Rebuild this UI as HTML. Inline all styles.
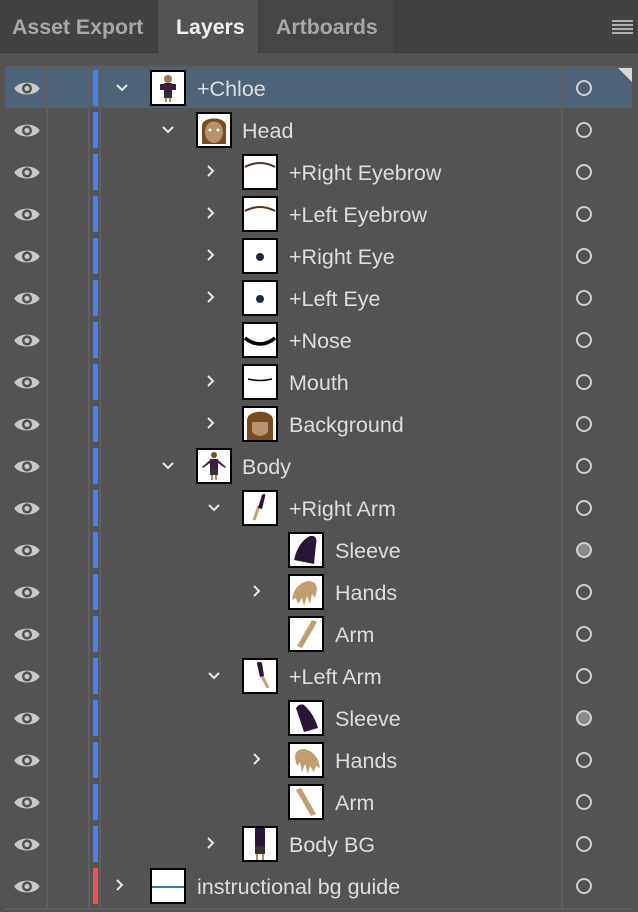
<!DOCTYPE html>
<html><head><meta charset="utf-8"><style>
*{margin:0;padding:0;box-sizing:border-box}
body{width:638px;height:912px;background:#535353;font-family:"Liberation Sans",sans-serif;position:relative;overflow:hidden;color:#dcdcdc}
.tabs{position:absolute;left:0;top:0;width:638px;height:53px;background:#424242;border-bottom:1px solid #3a3a3a}
.tab{position:absolute;top:0;height:53px;font-size:21.3px;font-weight:bold;line-height:55px;color:#a8a8a8;padding-left:12px}
.tab.a{background:#535353;color:#efefef;height:54px}
.row{position:absolute;left:5px;width:627px;height:40px;background:#535353}
.row.sel{background:#4f6378}
.line{position:absolute;left:5px;width:627px;height:2px;background:#5e5e5e}
.vd{position:absolute;top:66px;height:844px;width:2px;background:#5e5e5e}
.eye{position:absolute;left:8px;top:11px;width:28px;height:19px}
.bar{position:absolute;left:88px;top:2px;width:5px;height:36px;background:#4a7cf2}
.chev{position:absolute;top:12px;width:10px;height:14px}
.th{position:absolute;top:2px;width:36px;height:36px;background:#fff;border:2px solid #000;overflow:hidden}
.th svg{position:absolute;left:0;top:0}
.t{position:absolute;top:0;line-height:42px;font-size:21.5px;color:#dedede;white-space:nowrap}
.circ{position:absolute;left:571px;top:12px;width:16px;height:16px;border:2px solid #d0d0d0;border-radius:50%}
.circ.f{background:#8a8a8a}
</style></head><body>
<div class="tabs">
 <div class="tab" style="left:0;width:157px">Asset Export</div>
 <div class="tab a" style="left:158px;width:100px;padding-left:18px">Layers</div>
 <div class="tab" style="left:259px;width:136px;background:#454545;padding-left:17px">Artboards</div>
 <div style="position:absolute;left:395px;top:0;width:1px;height:53px;background:#3a3a3a"></div>
 <div style="position:absolute;right:5px;top:20px;width:21px;height:14px;background:repeating-linear-gradient(#b0b0b0 0 2px,transparent 2px 4px)"></div>
</div>

<svg width="0" height="0" style="position:absolute"><defs>
<symbol id="eye" viewBox="0 0 26 18"><path d="M1 9 C5 1.5 21 1.5 25 9 C21 16.5 5 16.5 1 9Z" fill="#c9c9c9"/><circle cx="13" cy="9" r="4.8" fill="#535353"/><circle cx="13" cy="9" r="2.4" fill="#c9c9c9"/></symbol>
<symbol id="dn" viewBox="0 0 14 10"><path d="M2 2 L7 7 L12 2" fill="none" stroke="#e8e8e8" stroke-width="2"/></symbol>
<symbol id="rt" viewBox="0 0 10 14"><path d="M2 2 L7 7 L2 12" fill="none" stroke="#e8e8e8" stroke-width="2"/></symbol>
</defs></svg>

<div class="row sel" style="top:68px"><svg class="eye"><use href="#eye"/></svg><div class="bar"></div><svg class="chev" style="left:110px;top:15px;width:14px;height:10px"><use href="#dn"/></svg><div class="th" style="left:145px"><svg width="32" height="32"><circle cx="16" cy="7" r="4" fill="#9b7551"/><rect x="12" y="11" width="8" height="9" fill="#3a2040"/><rect x="8" y="12" width="4" height="6" fill="#3a2040"/><rect x="20" y="12" width="4" height="6" fill="#3a2040"/><rect x="12" y="20" width="8" height="6" fill="#333"/><rect x="13" y="26" width="2" height="4" fill="#b08a62"/><rect x="17" y="26" width="2" height="4" fill="#b08a62"/></svg></div><div class="t" style="left:192px">+Chloe</div><div class="circ"></div><div style="position:absolute;right:0;top:0;width:0;height:0;border-left:14px solid transparent;border-top:14px solid #d8d8d8"></div></div>

<div class="row" style="top:110px"><svg class="eye"><use href="#eye"/></svg><div class="bar"></div><svg class="chev" style="left:156px;top:15px;width:14px;height:10px"><use href="#dn"/></svg><div class="th" style="left:191px"><svg width="32" height="32"><path d="M4 30 L4 12 C4 2 28 2 28 12 L28 30 Z" fill="#7a4a22"/><ellipse cx="16" cy="18" rx="9" ry="11" fill="#b89270"/><path d="M7 12 C10 6 22 6 25 12 L25 9 C22 3 10 3 7 9Z" fill="#7a4a22"/><circle cx="12" cy="16" r="1.5" fill="#fff"/><circle cx="20" cy="16" r="1.5" fill="#fff"/></svg></div><div class="t" style="left:237px">Head</div><div class="circ"></div></div>

<div class="row" style="top:152px"><svg class="eye"><use href="#eye"/></svg><div class="bar"></div><svg class="chev" style="left:201px"><use href="#rt"/></svg><div class="th" style="left:237px"><svg width="32" height="32"><path d="M1 11 Q16 3 31 11" fill="none" stroke="#5a3418" stroke-width="2"/></svg></div><div class="t" style="left:284px">+Right Eyebrow</div><div class="circ"></div></div>

<div class="row" style="top:194px"><svg class="eye"><use href="#eye"/></svg><div class="bar"></div><svg class="chev" style="left:201px"><use href="#rt"/></svg><div class="th" style="left:237px"><svg width="32" height="32"><path d="M1 13 Q16 5 31 13" fill="none" stroke="#5a3418" stroke-width="2"/></svg></div><div class="t" style="left:284px">+Left Eyebrow</div><div class="circ"></div></div>

<div class="row" style="top:236px"><svg class="eye"><use href="#eye"/></svg><div class="bar"></div><svg class="chev" style="left:201px"><use href="#rt"/></svg><div class="th" style="left:237px"><svg width="32" height="32"><circle cx="16" cy="17" r="4" fill="#1c2a44"/></svg></div><div class="t" style="left:284px">+Right Eye</div><div class="circ"></div></div>

<div class="row" style="top:278px"><svg class="eye"><use href="#eye"/></svg><div class="bar"></div><svg class="chev" style="left:201px"><use href="#rt"/></svg><div class="th" style="left:237px"><svg width="32" height="32"><circle cx="16" cy="17" r="4" fill="#1c2a44"/></svg></div><div class="t" style="left:284px">+Left Eye</div><div class="circ"></div></div>

<div class="row" style="top:320px"><svg class="eye"><use href="#eye"/></svg><div class="bar"></div><div class="th" style="left:237px"><svg width="32" height="32"><path d="M1 14 Q16 26 31 14" fill="none" stroke="#000" stroke-width="3.5"/></svg></div><div class="t" style="left:284px">+Nose</div><div class="circ"></div></div>

<div class="row" style="top:362px"><svg class="eye"><use href="#eye"/></svg><div class="bar"></div><svg class="chev" style="left:201px"><use href="#rt"/></svg><div class="th" style="left:237px"><svg width="32" height="32"><path d="M4 13 Q16 16 28 13" fill="none" stroke="#000" stroke-width="1.5"/></svg></div><div class="t" style="left:284px">Mouth</div><div class="circ"></div></div>

<div class="row" style="top:404px"><svg class="eye"><use href="#eye"/></svg><div class="bar"></div><svg class="chev" style="left:201px"><use href="#rt"/></svg><div class="th" style="left:237px"><svg width="32" height="32"><path d="M3 32 L3 12 C3 1 29 1 29 12 L29 32 Z" fill="#7a4a22"/><path d="M8 14 L24 14 L24 24 Q16 32 8 24Z" fill="#b89270"/></svg></div><div class="t" style="left:284px">Background</div><div class="circ"></div></div>

<div class="row" style="top:446px"><svg class="eye"><use href="#eye"/></svg><div class="bar"></div><svg class="chev" style="left:156px;top:15px;width:14px;height:10px"><use href="#dn"/></svg><div class="th" style="left:191px"><svg width="32" height="32"><circle cx="16" cy="5" r="3" fill="#7a4a22"/><rect x="12" y="9" width="8" height="10" fill="#3a2040"/><path d="M12 10 L4 17 L5 18 L12 13Z M20 10 L28 17 L27 18 L20 13Z" fill="#3a2040"/><rect x="12" y="19" width="8" height="6" fill="#333"/><rect x="13" y="25" width="2" height="5" fill="#b08a62"/><rect x="17" y="25" width="2" height="5" fill="#b08a62"/></svg></div><div class="t" style="left:237px">Body</div><div class="circ"></div></div>

<div class="row" style="top:488px"><svg class="eye"><use href="#eye"/></svg><div class="bar"></div><svg class="chev" style="left:202px;top:15px;width:14px;height:10px"><use href="#dn"/></svg><div class="th" style="left:237px"><svg width="32" height="32"><path d="M15 14 L10 28" stroke="#c29e6e" stroke-width="3"/><path d="M14 16 L18 3 Q22 0 21 5 L18 17Z" fill="#2a1535"/></svg></div><div class="t" style="left:284px">+Right Arm</div><div class="circ"></div></div>

<div class="row" style="top:530px"><svg class="eye"><use href="#eye"/></svg><div class="bar"></div><div class="th" style="left:283px"><svg width="32" height="32"><path d="M4 26 Q8 8 20 2 Q28 1 26 10 L24 30 Z" fill="#2a1535"/></svg></div><div class="t" style="left:330px">Sleeve</div><div class="circ f"></div></div>

<div class="row" style="top:572px"><svg class="eye"><use href="#eye"/></svg><div class="bar"></div><svg class="chev" style="left:247px"><use href="#rt"/></svg><div class="th" style="left:283px"><svg width="32" height="32"><path d="M2 24 Q4 8 18 5 Q27 5 27 14 L25 22 L22 18 L20 28 L17 20 L14 30 L12 22 L8 28 L6 22 Z" fill="#c29e6e"/></svg></div><div class="t" style="left:330px">Hands</div><div class="circ"></div></div>

<div class="row" style="top:614px"><svg class="eye"><use href="#eye"/></svg><div class="bar"></div><div class="th" style="left:283px"><svg width="32" height="32"><path d="M22 2 L27 4 L12 30 L7 28Z" fill="#c29e6e"/></svg></div><div class="t" style="left:330px">Arm</div><div class="circ"></div></div>

<div class="row" style="top:656px"><svg class="eye"><use href="#eye"/></svg><div class="bar"></div><svg class="chev" style="left:202px;top:15px;width:14px;height:10px"><use href="#dn"/></svg><div class="th" style="left:237px"><svg width="32" height="32"><path d="M17 14 L24 28" stroke="#c29e6e" stroke-width="3"/><path d="M13 4 Q14 0 18 3 L20 16 L16 17Z" fill="#2a1535"/></svg></div><div class="t" style="left:284px">+Left Arm</div><div class="circ"></div></div>

<div class="row" style="top:698px"><svg class="eye"><use href="#eye"/></svg><div class="bar"></div><div class="th" style="left:283px"><svg width="32" height="32"><path d="M6 6 Q10 1 14 3 Q24 12 28 26 L14 30 Z" fill="#2a1535"/></svg></div><div class="t" style="left:330px">Sleeve</div><div class="circ f"></div></div>

<div class="row" style="top:740px"><svg class="eye"><use href="#eye"/></svg><div class="bar"></div><svg class="chev" style="left:247px"><use href="#rt"/></svg><div class="th" style="left:283px"><svg width="32" height="32"><path d="M30 24 Q28 8 14 5 Q5 5 5 14 L7 22 L10 18 L12 28 L15 20 L18 30 L20 22 L24 28 L26 22 Z" fill="#c29e6e"/></svg></div><div class="t" style="left:330px">Hands</div><div class="circ"></div></div>

<div class="row" style="top:782px"><svg class="eye"><use href="#eye"/></svg><div class="bar"></div><div class="th" style="left:283px"><svg width="32" height="32"><path d="M6 4 L11 2 L26 28 L21 30Z" fill="#c29e6e"/></svg></div><div class="t" style="left:330px">Arm</div><div class="circ"></div></div>

<div class="row" style="top:824px"><svg class="eye"><use href="#eye"/></svg><div class="bar"></div><svg class="chev" style="left:201px"><use href="#rt"/></svg><div class="th" style="left:237px"><svg width="32" height="32"><rect x="11" y="0" width="10" height="18" fill="#2a1535"/><rect x="11" y="18" width="10" height="8" fill="#333"/><rect x="12" y="26" width="2" height="6" fill="#b08a62"/><rect x="18" y="26" width="2" height="6" fill="#b08a62"/></svg></div><div class="t" style="left:284px">Body BG</div><div class="circ"></div></div>

<div class="row" style="top:866px"><svg class="eye"><use href="#eye"/></svg><div class="bar" style="background:#f0505a"></div><svg class="chev" style="left:110px"><use href="#rt"/></svg><div class="th" style="left:145px"><svg width="32" height="32"><rect x="0" y="16" width="32" height="2" fill="#3a7ab0"/></svg></div><div class="t" style="left:192px">instructional bg guide</div><div class="circ"></div></div>

<div class="vd" style="left:46px"></div>
<div class="vd" style="left:88px"></div>
<div class="vd" style="left:99px"></div>
<div class="vd" style="left:561px"></div>
<div class="vd" style="left:632px;width:6px;background:#535353"></div>
<div class="line" style="top:66px"></div>
<div class="line" style="top:908px"></div>
</body></html>
